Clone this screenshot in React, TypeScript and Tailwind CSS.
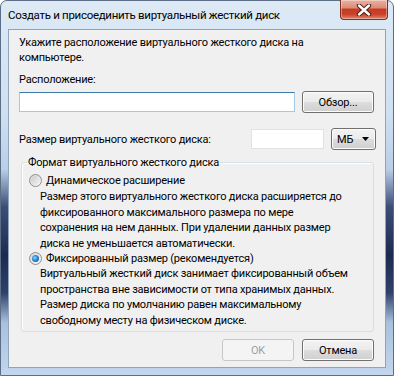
const CloseButton = () => (
  <div className="-mt-[1px] mr-[5px] flex h-[20px] w-[48px] items-center justify-center rounded-b-[4px] border border-t-0 border-[#7a3223] bg-[linear-gradient(to_bottom,#eab3a4_0%,#dc8d79_40%,#c83a22_50%,#c8432b_75%,#e0866d_100%)] shadow-[inset_0_0_0_1px_rgba(255,255,255,0.35)]">
    <svg width="16" height="12" viewBox="0 0 16 12">
      <path
        d="M3 1.5 L13 10.5 M13 1.5 L3 10.5"
        stroke="#4b1d14"
        strokeWidth="4.4"
        strokeLinecap="round"
      />
      <path
        d="M3 1.5 L13 10.5 M13 1.5 L3 10.5"
        stroke="#ffffff"
        strokeWidth="2.4"
        strokeLinecap="round"
      />
    </svg>
  </div>
);

const Radio = ({ checked }: { checked?: boolean }) => (
  <span className="flex h-[13px] w-[13px] shrink-0 items-center justify-center rounded-full border border-[#8e8f8f] bg-[linear-gradient(135deg,#d4d4d4,#f8f8f8)]">
    {checked ? (
      <span className="h-[7px] w-[7px] rounded-full bg-[radial-gradient(circle_at_40%_40%,#8fd7ff_0%,#2b8ad6_45%,#0d4f94_100%)]" />
    ) : (
      <span className="h-[9px] w-[9px] rounded-full bg-[linear-gradient(135deg,#cbcbcb,#f4f4f4)]" />
    )}
  </span>
);

const Button = ({
  children,
  disabled,
  className,
}: {
  children: React.ReactNode;
  disabled?: boolean;
  className?: string;
}) => (
  <div
    className={
      disabled
        ? "flex h-[22px] w-[72px] items-center justify-center rounded-[3px] border border-[#c4c7ca] bg-[#f4f4f4] text-[#a0a0a0] " +
          (className ?? "")
        : "flex h-[22px] w-[72px] items-center justify-center rounded-[3px] border border-[#707070] bg-[linear-gradient(to_bottom,#f3f3f3_0%,#ebebeb_50%,#dddddd_50%,#cfcfcf_100%)] shadow-[inset_0_0_0_1px_#fcfcfc] " +
          (className ?? "")
    }
  >
    {children}
  </div>
);

export default function App() {
  return (
    <div className="h-[376px] w-[394px] bg-white">
      <div className="flex h-full flex-col rounded-t-[7px] border border-[#5b6e86] bg-[linear-gradient(to_bottom,#dde9f5_0%,#cfe0f1_30%,#b9cfe8_45%,#3c4f78_55%,#1d2a50_68%,#2f416b_78%,#a9c1de_86%,#c3d7ed_100%)] font-['Roboto',sans-serif] text-[11px] leading-[15px] tracking-[-0.2px] text-black">
        <div className="flex h-[28px] shrink-0 items-start justify-between">
          <div className="pl-[7px] pt-[7px] text-[11.5px] tracking-[-0.3px]">
            Создать и присоединить виртуальный жесткий диск
          </div>
          <CloseButton />
        </div>

        <div className="mx-[7px] mb-[7px] flex flex-1 flex-col overflow-hidden border border-[#8fa3bb] bg-[#f0f0f0] pl-[10px] pt-[5px]">
          <div>
            Укажите расположение виртуального жесткого диска на
            <br />
            компьютере.
          </div>
          <div className="mt-[7px]">Расположение:</div>
          <div className="mt-[4px] flex h-[22px] items-center gap-[7px]">
            <div className="h-[20px] w-[276px] border border-[#a5c9e4] border-t-[#3d7bad] bg-white" />
            <Button>Обзор...</Button>
          </div>

          <div className="mt-[15px] flex h-[22px] items-center">
            <div className="w-[232px]">Размер виртуального жесткого диска:</div>
            <div className="h-[20px] w-[73px] border border-[#dfe3e8] bg-white" />
            <div className="ml-[7px] flex h-[22px] w-[45px] items-center justify-between rounded-[3px] border border-[#707070] bg-[linear-gradient(to_bottom,#f3f3f3_0%,#ebebeb_50%,#dddddd_50%,#cfcfcf_100%)] pl-[5px] pr-[6px] shadow-[inset_0_0_0_1px_#fcfcfc]">
              <span>МБ</span>
              <svg width="7" height="4" viewBox="0 0 7 4">
                <path d="M0 0 H7 L3.5 4 Z" fill="#000" />
              </svg>
            </div>
          </div>

          <fieldset className="ml-[2px] mt-[5px] w-[353px] rounded-[3px] border border-[#d5dfe5] pb-[3px] pl-[7px] shadow-[inset_1px_1px_0_#ffffff]">
            <legend className="-ml-[2px] px-[1px]">
              Формат виртуального жесткого диска
            </legend>
            <div className="mt-[3px] flex items-center gap-[4px]">
              <Radio />
              <span>Динамическое расширение</span>
            </div>
            <div className="mt-[1px] pl-[11px] leading-[15.5px]">
              Размер этого виртуального жесткого диска расширяется до
              <br />
              фиксированного максимального размера по мере
              <br />
              сохранения на нем данных. При удалении данных размер
              <br />
              диска не уменьшается автоматически.
            </div>
            <div className="flex items-center gap-[4px]">
              <Radio checked />
              <span>Фиксированный размер (рекомендуется)</span>
            </div>
            <div className="pl-[11px] leading-[15.5px]">
              Виртуальный жесткий диск занимает фиксированный объем
              <br />
              пространства вне зависимости от типа хранимых данных.
              <br />
              Размер диска по умолчанию равен максимальному
              <br />
              свободному месту на физическом диске.
            </div>
          </fieldset>

          <div className="mt-[7px] flex justify-end gap-[8px] pr-[11px]">
            <Button disabled>OK</Button>
            <Button>Отмена</Button>
          </div>
        </div>
      </div>
    </div>
  );
}
